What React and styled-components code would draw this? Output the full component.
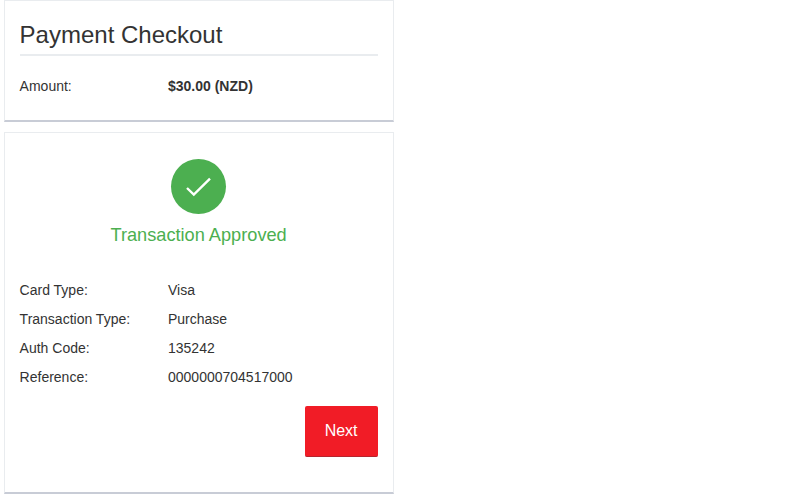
import React from "react";
import styled, { createGlobalStyle } from "styled-components";

const GlobalStyle = createGlobalStyle`
  html, body {
    margin: 0;
    padding: 0;
    background: #fff;
    color: #333;
    font-family: "Liberation Sans", Arial, sans-serif;
    font-size: 14px;
  }
`;

const Page = styled.div`
  width: 390px;
  margin-left: 3.6px;
  display: flex;
  flex-direction: column;
  gap: 10px;
`;

const Card = styled.section`
  box-sizing: border-box;
  height: ${(p) => p.$height}px;
  padding: 0 15px;
  background: #fff;
  border: 1px solid #e9ecef;
  border-bottom: 2px solid #c8ccd6;
`;

const Title = styled.h1`
  margin: 0;
  padding: 19px 0 5px;
  height: 29px;
  line-height: 29px;
  font-size: 24px;
  font-weight: 400;
  border-bottom: 2px solid #e9ecef;
`;

const Row = styled.div`
  display: flex;
  height: 29px;
  line-height: 29px;
`;

const Label = styled.span`
  width: 148.4px;
`;

const Value = styled.span`
  font-weight: ${(p) => (p.$bold ? 700 : 400)};
`;

const AmountRow = styled.div`
  margin-top: 16px;
`;

const Status = styled.div`
  display: flex;
  flex-direction: column;
  align-items: center;
  padding-top: 26px;
  margin-bottom: 30px;
`;

const Circle = styled.div`
  width: 55px;
  height: 55px;
  border-radius: 50%;
  background: #4caf50;
  display: flex;
  align-items: center;
  justify-content: center;
`;

const StatusText = styled.div`
  margin-top: 10px;
  font-size: 18.2px;
  line-height: 22px;
  color: #4caf50;
`;

const Actions = styled.div`
  display: flex;
  justify-content: flex-end;
  margin-top: 14px;
`;

const NextButton = styled.button`
  width: 73px;
  height: 51px;
  padding: 0;
  border: 0;
  border-bottom: 1px solid #b5252e;
  border-radius: 2px;
  background: #f11c26;
  color: #fff;
  font-family: inherit;
  font-size: 16px;
`;

const details = [
  ["Card Type:", "Visa"],
  ["Transaction Type:", "Purchase"],
  ["Auth Code:", "135242"],
  ["Reference:", "0000000704517000"],
];

export default function App() {
  return (
    <>
      <GlobalStyle />
      <Page>
        <Card $height={122}>
          <Title>Payment Checkout</Title>
          <AmountRow>
            <Row>
              <Label>Amount:</Label>
              <Value $bold>$30.00 (NZD)</Value>
            </Row>
          </AmountRow>
        </Card>
        <Card $height={362}>
          <Status>
            <Circle>
              <svg width="28" height="22" viewBox="0 0 28 22" fill="none" stroke="#fff" strokeWidth="2.4">
                <path d="M2 12 L8.8 18.6 L25 2.6" />
              </svg>
            </Circle>
            <StatusText>Transaction Approved</StatusText>
          </Status>
          {details.map(([label, value]) => (
            <Row key={label}>
              <Label>{label}</Label>
              <Value>{value}</Value>
            </Row>
          ))}
          <Actions>
            <NextButton>Next</NextButton>
          </Actions>
        </Card>
      </Page>
    </>
  );
}
